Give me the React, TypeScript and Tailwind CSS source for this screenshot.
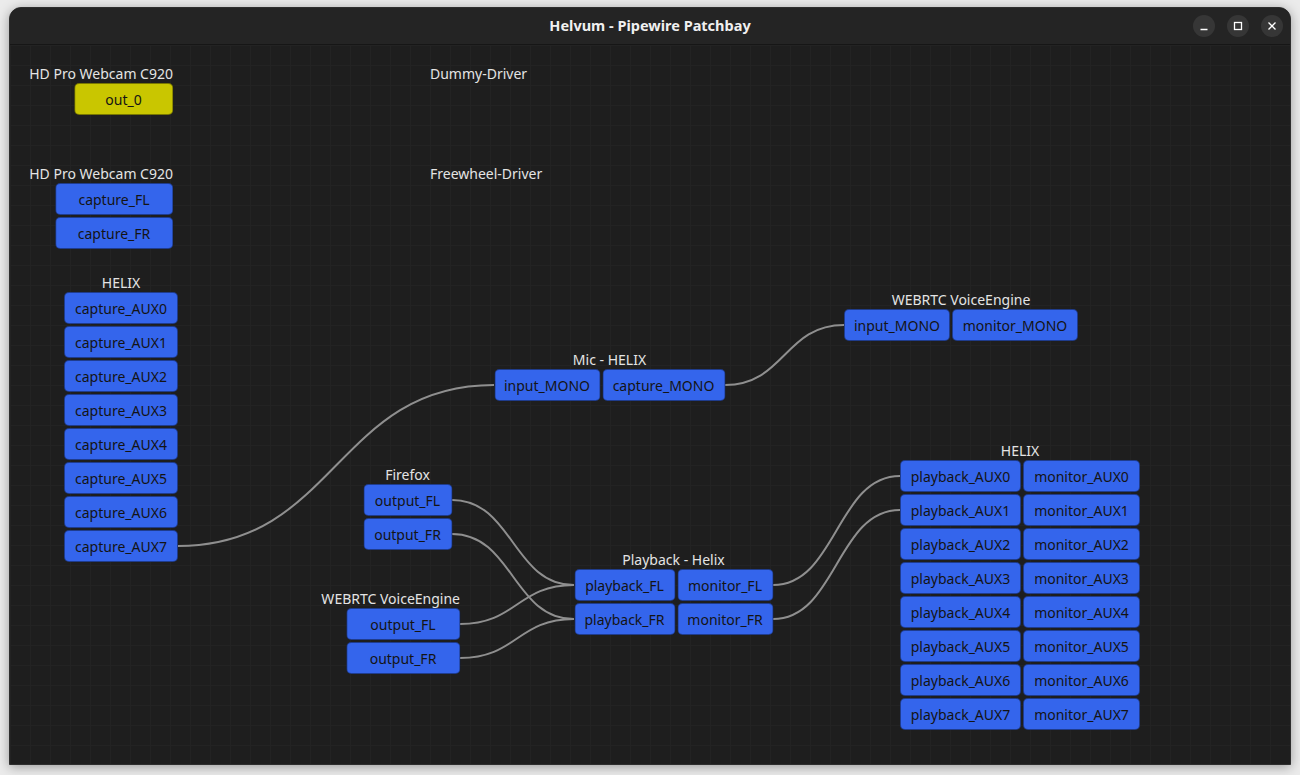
import React from 'react';

type Port = { name: string; yellow?: boolean };
type Column = { width: number; ports: Port[] };
type GraphNode = {
  label: string;
  align: 'center' | 'end' | 'label';
  x: number; // center x, right edge x, or label left x (page coords)
  top: number; // top of the first port row (page coords)
  cols: Column[];
};

// canvas origin in page coordinates
const OX = 10;
const OY = 45;

const aux = (prefix: string) =>
  [0, 1, 2, 3, 4, 5, 6, 7].map((i) => ({ name: `${prefix}_AUX${i}` }));

const nodes: GraphNode[] = [
  { label: 'HD Pro Webcam C920', align: 'end', x: 173, top: 83, cols: [{ width: 99, ports: [{ name: 'out_0', yellow: true }] }] },
  { label: 'Dummy-Driver', align: 'label', x: 430, top: 83, cols: [] },
  { label: 'HD Pro Webcam C920', align: 'end', x: 173, top: 183, cols: [{ width: 118, ports: [{ name: 'capture_FL' }, { name: 'capture_FR' }] }] },
  { label: 'Freewheel-Driver', align: 'label', x: 430, top: 183, cols: [] },
  { label: 'HELIX', align: 'center', x: 121, top: 292, cols: [{ width: 114, ports: aux('capture') }] },
  {
    label: 'Mic - HELIX', align: 'center', x: 609.5, top: 369,
    cols: [{ width: 106, ports: [{ name: 'input_MONO' }] }, { width: 123, ports: [{ name: 'capture_MONO' }] }],
  },
  {
    label: 'WEBRTC VoiceEngine', align: 'center', x: 961, top: 309,
    cols: [{ width: 106, ports: [{ name: 'input_MONO' }] }, { width: 126, ports: [{ name: 'monitor_MONO' }] }],
  },
  { label: 'Firefox', align: 'center', x: 407.5, top: 484, cols: [{ width: 89, ports: [{ name: 'output_FL' }, { name: 'output_FR' }] }] },
  { label: 'WEBRTC VoiceEngine', align: 'end', x: 460, top: 608, cols: [{ width: 114, ports: [{ name: 'output_FL' }, { name: 'output_FR' }] }] },
  {
    label: 'Playback - Helix', align: 'center', x: 673.5, top: 569,
    cols: [
      { width: 101, ports: [{ name: 'playback_FL' }, { name: 'playback_FR' }] },
      { width: 96, ports: [{ name: 'monitor_FL' }, { name: 'monitor_FR' }] },
    ],
  },
  {
    label: 'HELIX', align: 'center', x: 1020, top: 460,
    cols: [{ width: 121, ports: aux('playback') }, { width: 117, ports: aux('monitor') }],
  },
];

// [fromX, fromY, toX, toY] in page coords
const links: [number, number, number, number][] = [
  [178, 546, 494, 385],
  [725, 385, 844, 325],
  [452, 500, 574, 585],
  [452, 534, 574, 619],
  [460, 624, 574, 585],
  [460, 658, 574, 619],
  [773, 585, 900, 476],
  [773, 619, 900, 510],
];

const linkPath = ([x1, y1, x2, y2]: [number, number, number, number]) => {
  const fx = x1 - OX, fy = y1 - OY, tx = x2 - OX, ty = y2 - OY;
  const half = Math.abs(tx - fx) / 2;
  return `M ${fx} ${fy} C ${fx + half} ${fy}, ${tx - half} ${ty}, ${tx} ${ty}`;
};

const PortButton: React.FC<{ port: Port; width: number }> = ({ port, width }) => (
  <div
    style={{ width }}
    className={`h-[32px] flex items-center justify-center rounded-[5px] border border-black/40 text-[14px] text-[#141414] whitespace-nowrap ${
      port.yellow ? 'bg-[#c9c600]' : 'bg-[#3465ec]'
    }`}
  >
    {port.name}
  </div>
);

const NodeBox: React.FC<{ node: GraphNode }> = ({ node }) => {
  const shift =
    node.align === 'center' ? '-translate-x-1/2 items-center' : node.align === 'end' ? '-translate-x-full items-end' : 'items-start';
  return (
    <div
      style={{ left: node.x - OX, top: node.top - 18 - OY }}
      className={`absolute flex flex-col ${shift}`}
    >
      <div className="h-[18px] leading-[17px] text-[14px] text-[#e4e4e4] whitespace-nowrap self-stretch text-center">
        {node.label}
      </div>
      {node.cols.length > 0 && (
        <div className="flex gap-[2px]">
          {node.cols.map((col, ci) => (
            <div key={ci} className="flex flex-col gap-[2px]">
              {col.ports.map((p) => (
                <PortButton key={p.name} port={p} width={col.width} />
              ))}
            </div>
          ))}
        </div>
      )}
    </div>
  );
};

const WinButton: React.FC<{ children: React.ReactNode }> = ({ children }) => (
  <div className="w-[22px] h-[22px] rounded-full bg-[#363636] flex items-center justify-center text-white">
    {children}
  </div>
);

export default function App() {
  return (
    <div
      className="w-[1300px] h-[775px] bg-[#ebebeb] pt-[7px] pl-[9px] overflow-hidden"
      style={{ fontFamily: '"Noto Sans", "Open Sans", sans-serif' }}
    >
      <div className="w-[1282px] h-[758px] rounded-t-[12px] bg-[#1e1e1e] border border-[#2e2e2e] shadow-[0_2px_12px_rgba(0,0,0,0.35)] flex flex-col overflow-hidden">
        {/* header bar */}
        <div className="h-[37px] shrink-0 bg-[#242424] border-b border-[#161616] flex items-center relative">
          <div className="flex-1 text-center text-[14.5px] font-bold text-[#f0f0f0]">Helvum - Pipewire Patchbay</div>
          <div className="absolute right-[7px] top-[7px] flex gap-[12px]">
            <WinButton>
              <svg width="10" height="10" viewBox="0 0 10 10">
                <path d="M1.5 8.5 H8.5" stroke="currentColor" strokeWidth="1.3" />
              </svg>
            </WinButton>
            <WinButton>
              <svg width="10" height="10" viewBox="0 0 10 10">
                <rect x="1.5" y="1.5" width="7" height="7" fill="none" stroke="currentColor" strokeWidth="1.3" />
              </svg>
            </WinButton>
            <WinButton>
              <svg width="10" height="10" viewBox="0 0 10 10">
                <path d="M1.5 1.5 L8.5 8.5 M8.5 1.5 L1.5 8.5" stroke="currentColor" strokeWidth="1.3" />
              </svg>
            </WinButton>
          </div>
        </div>

        {/* graph canvas */}
        <div className="relative flex-1 bg-[#1e1e1e] bg-[linear-gradient(to_right,#232323_1px,transparent_1px),linear-gradient(to_bottom,#232323_1px,transparent_1px)] bg-[length:20px_20px]">
          <svg className="absolute inset-0 w-full h-full">
            {links.map((l, i) => (
              <path key={i} d={linkPath(l)} fill="none" stroke="#8f8f8f" strokeWidth="2" />
            ))}
          </svg>
          {nodes.map((n, i) => (
            <NodeBox key={i} node={n} />
          ))}
        </div>
      </div>
    </div>
  );
}
